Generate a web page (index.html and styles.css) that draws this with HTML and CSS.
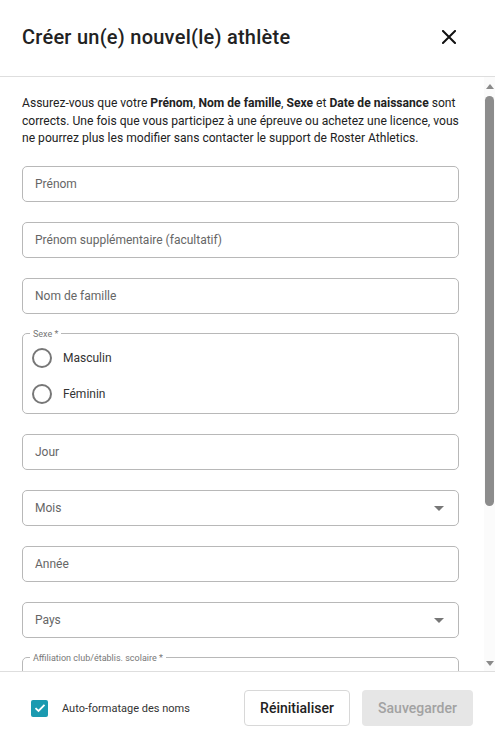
FILE: index.html
```html
<!DOCTYPE html>
<html lang="fr">
<head>
<meta charset="utf-8">
<title>Créer un(e) nouvel(le) athlète</title>
<link rel="stylesheet" href="styles.css">
</head>
<body>
<div class="dialog">
  <header class="head">
    <h1 class="title">Créer un(e) nouvel(le) athlète</h1>
    <button class="close" aria-label="Fermer">
      <svg width="14" height="14" viewBox="0 0 14 14"><path d="M1 1L13 13M13 1L1 13" stroke="#111" stroke-width="2" stroke-linecap="square"/></svg>
    </button>
  </header>
  <div class="scroller">
    <div class="content">
      <p class="intro">Assurez-vous que votre <b>Prénom</b>, <b>Nom de famille</b>, <b>Sexe</b> et <b>Date de naissance</b> sont corrects. Une fois que vous participez à une épreuve ou achetez une licence, vous ne pourrez plus les modifier sans contacter le support de Roster Athletics.</p>
      <div class="field"><span class="ph">Prénom</span></div>
      <div class="field"><span class="ph">Prénom supplémentaire (facultatif)</span></div>
      <div class="field"><span class="ph">Nom de famille</span></div>
      <fieldset class="group">
        <legend class="legend">Sexe *</legend>
        <label class="radio"><span class="circle"></span><span>Masculin</span></label>
        <label class="radio"><span class="circle"></span><span>Féminin</span></label>
      </fieldset>
      <div class="field"><span class="ph">Jour</span></div>
      <div class="field select"><span class="ph">Mois</span><span class="caret"></span></div>
      <div class="field"><span class="ph">Année</span></div>
      <div class="field select"><span class="ph">Pays</span><span class="caret"></span></div>
      <fieldset class="group tall">
        <legend class="legend">Affiliation club/établis. scolaire *</legend>
      </fieldset>
    </div>
    <div class="bar">
      <span class="arrow up"></span>
      <span class="thumb"></span>
      <span class="spacer"></span>
      <span class="arrow down"></span>
    </div>
  </div>
  <footer class="foot">
    <label class="check">
      <span class="box"><svg width="12" height="10" viewBox="0 0 12 10"><path d="M1.5 5.2L4.5 8L10.5 1.8" fill="none" stroke="#fff" stroke-width="1.8"/></svg></span>
      <span>Auto-formatage des noms</span>
    </label>
    <div class="actions">
      <button class="btn reset">Réinitialiser</button>
      <button class="btn save">Sauvegarder</button>
    </div>
  </footer>
</div>
</body>
</html>
```
FILE: styles.css
```css
* { box-sizing: border-box; }
html, body { margin: 0; padding: 0; background: #fff; }
body { font-family: Roboto, "Liberation Sans", sans-serif; color: #222; }
.dialog { width: 495px; height: 744px; display: flex; flex-direction: column; overflow: hidden; }
.head { height: 77px; flex: none; display: flex; align-items: center; justify-content: space-between; padding: 0 39px 2px 22px; border-bottom: 1px solid #dedede; }
.title { margin: 0; font-size: 20px; font-weight: 500; color: #222; letter-spacing: 0.25px; }
.close { border: 0; background: none; padding: 0; width: 14px; height: 14px; display: flex; cursor: pointer; }
.scroller { flex: 1; display: flex; overflow: hidden; min-height: 0; }
.content { flex: 1; padding: 18px 25px 0 22px; overflow: hidden; display: flex; flex-direction: column; gap: 20px; }
.intro { margin: 0 0 -2px; font-size: 12.1px; line-height: 17.5px; color: #222; }
.intro b { font-weight: 700; }
.field { flex: none; height: 36px; border: 1px solid #b8b8b8; border-radius: 5px; display: flex; align-items: center; justify-content: space-between; padding: 0 14px 0 12px; }
.ph { font-size: 12px; color: #666; }
.caret { width: 0; height: 0; border-left: 5px solid transparent; border-right: 5px solid transparent; border-top: 5px solid #777; margin-top: 2px; }
.group { flex: none; margin: -5px 0 0; border: 1px solid #b8b8b8; border-radius: 5px; padding: 0 0 1px 9px; min-width: 0; }
.legend { font-size: 9px; color: #777; padding: 0 3px; margin-left: -2px; }
.radio { display: flex; align-items: center; gap: 11px; height: 36px; font-size: 12px; color: #333; }
.circle { width: 20px; height: 20px; border: 2px solid #777; border-radius: 50%; }
.radio:first-of-type { margin-top: 1px; }
.tall { height: 60px; }
.bar { width: 11px; flex: none; display: flex; flex-direction: column; align-items: center; padding: 7px 0 5px; background: #fbfbfb; }
.arrow { width: 0; height: 0; border-left: 4px solid transparent; border-right: 4px solid transparent; flex: none; }
.arrow.up { border-bottom: 5px solid #8a8a8a; }
.arrow.down { border-top: 5px solid #8a8a8a; }
.thumb { width: 9px; height: 410px; background: #8c8c8c; border-radius: 5px; margin-top: 7px; flex: none; }
.spacer { flex: 1; }
.foot { height: 73px; flex: none; border-top: 1px solid #dedede; display: flex; align-items: center; justify-content: space-between; padding: 0 22px 0 31px; }
.check { display: flex; align-items: center; gap: 14px; font-size: 11px; color: #333; }
.box { width: 17px; height: 17px; background: #1b9ab0; border-radius: 2px; display: flex; align-items: center; justify-content: center; }
.actions { display: flex; gap: 12px; }
.btn { font-family: Roboto, "Liberation Sans", sans-serif; font-size: 14px; font-weight: 500; height: 36px; border-radius: 4px; padding: 0; }
.reset { width: 106px; background: #fff; border: 1px solid #d8d8d8; color: #222; }
.save { width: 111px; background: #e6e6e6; border: 0; color: #a2a2a2; }
```
